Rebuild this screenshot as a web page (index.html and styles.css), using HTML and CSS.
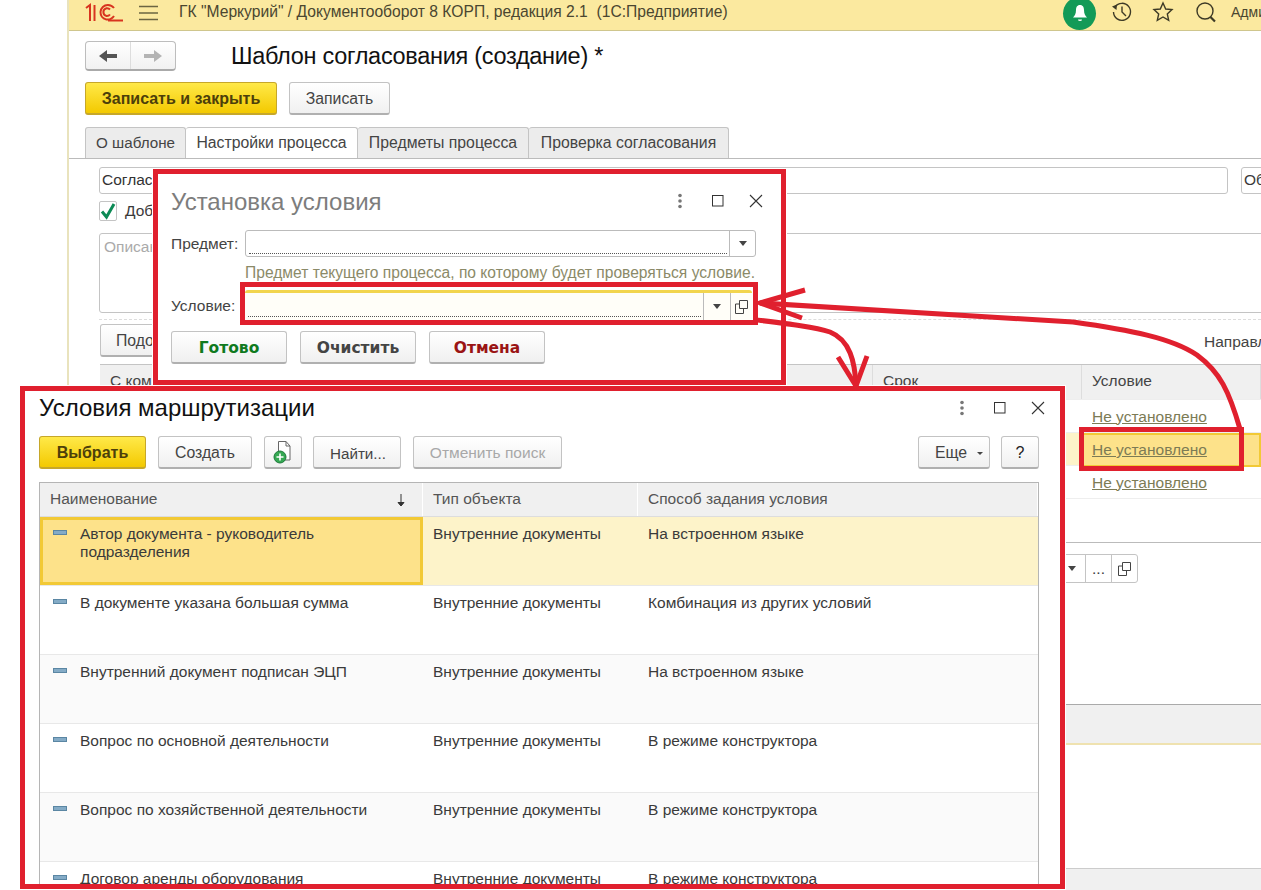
FILE: index.html
```html
<!DOCTYPE html>
<html lang="ru">
<head>
<meta charset="utf-8">
<title>Шаблон согласования</title>
<link rel="stylesheet" href="styles.css">
</head>
<body>
<div class="desktop">

  <main class="app">
    <header class="topbar">
      <svg class="logo" viewBox="0 0 38 20" width="38" height="20"><g fill="none" stroke="#d8341f" stroke-width="2"><path d="M1 5 5 2V18"/><path d="M9.500 2V18"/><path d="M29 13a8 8 0 0 1-8 3.400 7.400 7.400 0 0 1-5.500-7.400A7.300 7.300 0 0 1 23 2a8 8 0 0 1 6 3"/><path d="M25 11.500a4 4 0 0 1-3.500 1.500 4 4 0 0 1 0-7.800 4 4 0 0 1 3.500 1.300"/><path d="M23 17.500H38"/></g></svg>
      <svg class="burger" viewBox="0 0 19 16" width="19" height="16"><path d="M0 1.500H19M0 8H19M0 14.500H19" stroke="#6b6542" stroke-width="1.300"/></svg>
      <span class="apptitle">ГК "Меркурий" / Документооборот 8 КОРП, редакция 2.1&nbsp; (1С:Предприятие)</span>
      <span class="spacer"></span>
      <span class="bell"><svg viewBox="0 0 20 20" width="20" height="20"><path d="M10 2c3 0 4 2.500 4 5 0 4 1.500 6 3 7.500H3C4.500 13 6 11 6 7c0-2.500 1-5 4-5Z" fill="#fff"/><path d="M8 16.500h4a2 1.500 0 0 1-4 0Z" fill="#fff"/></svg></span>
      <svg class="tico clock" viewBox="0 0 22 22" width="22" height="22"><path d="M4 6a8.500 8.500 0 1 1-1.500 5M11 5.500V11l4 4" fill="none" stroke="#3d3a26" stroke-width="1.400"/><path d="M1 5.500 6 3.500 5.500 9Z" fill="#3d3a26"/></svg>
      <svg class="tico star" viewBox="0 0 22 22" width="22" height="22"><path d="M11 2l2.700 6 6.300.6-4.700 4.300 1.400 6.500L11 16l-5.700 3.400 1.400-6.500L2 8.600 8.300 8Z" fill="none" stroke="#3d3a26" stroke-width="1.400"/></svg>
      <svg class="tico find-ico" viewBox="0 0 22 22" width="22" height="22"><circle cx="10" cy="10" r="8" fill="none" stroke="#3d3a26" stroke-width="1.400"/><path d="M15.500 16 20 20.500" stroke="#3d3a26" stroke-width="2.200"/></svg>
      <span class="user">Администратор</span>
    </header>

    <div class="navrow">
      <div class="navbtns">
        <span class="navbtn"><svg viewBox="0 0 18 14" width="18" height="14"><path d="M0 7 8 1V5H18V9H8V13Z" fill="#555"/></svg></span>
        <span class="navbtn"><svg viewBox="0 0 18 14" width="18" height="14"><path d="M18 7 10 1V5H0V9H10V13Z" fill="#b4b4b4"/></svg></span>
      </div>
      <h1 class="doctitle">Шаблон согласования (создание) *</h1>
    </div>

    <div class="cmdrow">
      <button class="btn primary wide">Записать и закрыть</button>
      <button class="btn save">Записать</button>
    </div>

    <div class="tabs">
      <span class="tab t1">О шаблоне</span>
      <span class="tab t2 active">Настройки процесса</span>
      <span class="tab t3">Предметы процесса</span>
      <span class="tab t4">Проверка согласования</span>
    </div>

    <section class="pane">
      <div class="namerow">
        <div class="field namefield">Согласование</div>
        <div class="field objfield">Об</div>
      </div>
      <label class="checkrow">
        <span class="check"><svg viewBox="0 0 18 20" width="18" height="20"><path d="M3 10.500 7.500 16 15 3" fill="none" stroke="#0c8a55" stroke-width="3"/></svg></span>
        <span>Добавить</span>
      </label>
      <div class="field descfield">Описание</div>
      <div class="dashline"></div>
      <div class="subrow">
        <button class="btn sub">Подобрать</button>
        <span class="spacer"></span>
        <span class="direction">Направление</span>
      </div>
      <div class="grid">
        <div class="grow head"><span>С комментарием</span><span>Срок</span><span>Условие</span></div>
        <div class="grow"><span></span><span></span><a class="lnk">Не установлено</a></div>
        <div class="grow sel"><span></span><span></span><a class="lnk cur">Не установлено</a></div>
        <div class="grow"><span></span><span></span><a class="lnk">Не установлено</a></div>
      </div>
      <div class="lower">
        <div class="field combo"><i class="caret"></i><b class="cell">...</b><b class="cell last"><svg class="open" viewBox="0 0 13 14" width="13" height="14"><path d="M4.500 .5h8v8h-8ZM4.500 4H.5v9.500h8V9" fill="none" stroke="#444"/></svg></b></div>
      </div>
      <div class="panel"></div>
      <div class="panel2"></div>
    </section>
  </main>

  <section class="dlg dlg1">
    <div class="dlghead">
      <h2 class="dlgtitle muted">Установка условия</h2>
      <span class="spacer"></span>
      <span class="winctl">
        <svg viewBox="0 0 8 16" width="8" height="16"><g fill="#777"><circle cx="4" cy="2.500" r="1.800"/><circle cx="4" cy="8" r="1.800"/><circle cx="4" cy="13.500" r="1.800"/></g></svg>
        <svg viewBox="0 0 12 12" width="12" height="12"><rect x=".5" y=".5" width="10.500" height="10.500" fill="none" stroke="#333"/></svg>
        <svg viewBox="0 0 14 14" width="14" height="14"><path d="M1 1 13 13M13 1 1 13" stroke="#333" stroke-width="1.100"/></svg>
      </span>
    </div>
    <div class="frow subject">
      <span class="flabel">Предмет:</span>
      <div class="finput f1"><span class="fval"></span><b class="fbtn"><i class="caret"></i></b></div>
    </div>
    <p class="hint">Предмет текущего процесса, по которому будет проверяться условие.</p>
    <div class="frow condition">
      <span class="flabel">Условие:</span>
      <div class="finput f2"><span class="fval"></span><b class="fbtn"><i class="caret"></i></b><b class="fbtn narrow"><svg class="open" viewBox="0 0 13 14" width="13" height="14"><path d="M4.500 .5h8v8h-8ZM4.500 4H.5v9.500h8V9" fill="none" stroke="#444"/></svg></b></div>
    </div>
    <div class="dlgbtns">
      <button class="btn act ok">Готово</button>
      <button class="btn act clr">Очистить</button>
      <button class="btn act cancel">Отмена</button>
    </div>
    <div class="redbox condbox"></div>
  </section>

  <section class="dlg dlg2">
    <div class="dlghead">
      <h2 class="dlgtitle">Условия маршрутизации</h2>
      <span class="spacer"></span>
      <span class="winctl">
        <svg viewBox="0 0 8 16" width="8" height="16"><g fill="#777"><circle cx="4" cy="2.500" r="1.800"/><circle cx="4" cy="8" r="1.800"/><circle cx="4" cy="13.500" r="1.800"/></g></svg>
        <svg viewBox="0 0 12 12" width="12" height="12"><rect x=".5" y=".5" width="10.500" height="10.500" fill="none" stroke="#333"/></svg>
        <svg viewBox="0 0 14 14" width="14" height="14"><path d="M1 1 13 13M13 1 1 13" stroke="#333" stroke-width="1.100"/></svg>
      </span>
    </div>
    <div class="tools">
      <button class="btn primary pick">Выбрать</button>
      <button class="btn create">Создать</button>
      <button class="btn iconbtn"><svg viewBox="0 0 20 24" width="20" height="24"><path d="M5.500 1.500H13l4 4.500V20H5.500Z" fill="#fff" stroke="#666"/><path d="M13 1.500V6h4" fill="none" stroke="#666"/><circle cx="7" cy="17" r="6" fill="#35a853" stroke="#1d7a3a"/><path d="M7 13.500v7M3.500 17h7" stroke="#fff" stroke-width="1.600"/></svg></button>
      <button class="btn find">Найти...</button>
      <button class="btn off">Отменить поиск</button>
      <span class="spacer"></span>
      <button class="btn more">Еще<i class="caret small"></i></button>
      <button class="btn help">?</button>
    </div>
    <div class="list">
      <div class="lrow lhead">
        <span class="lcell">Наименование<svg class="sort" viewBox="0 0 10 14" width="10" height="14"><path d="M5 1V12M2 9.500 5 13 8 9.500Z" stroke="#333" fill="#333"/></svg></span>
        <span class="lcell">Тип объекта</span>
        <span class="lcell">Способ задания условия</span>
      </div>
      <div class="lrow current">
        <span class="lcell focus"><i class="mark"></i><span>Автор документа - руководитель подразделения</span></span>
        <span class="lcell">Внутренние документы</span>
        <span class="lcell">На встроенном языке</span>
      </div>
      <div class="lrow">
        <span class="lcell"><i class="mark"></i><span>В документе указана большая сумма</span></span>
        <span class="lcell">Внутренние документы</span>
        <span class="lcell">Комбинация из других условий</span>
      </div>
      <div class="lrow alt">
        <span class="lcell"><i class="mark"></i><span>Внутренний документ подписан ЭЦП</span></span>
        <span class="lcell">Внутренние документы</span>
        <span class="lcell">На встроенном языке</span>
      </div>
      <div class="lrow">
        <span class="lcell"><i class="mark"></i><span>Вопрос по основной деятельности</span></span>
        <span class="lcell">Внутренние документы</span>
        <span class="lcell">В режиме конструктора</span>
      </div>
      <div class="lrow alt">
        <span class="lcell"><i class="mark"></i><span>Вопрос по хозяйственной деятельности</span></span>
        <span class="lcell">Внутренние документы</span>
        <span class="lcell">В режиме конструктора</span>
      </div>
      <div class="lrow">
        <span class="lcell"><i class="mark"></i><span>Договор аренды оборудования</span></span>
        <span class="lcell">Внутренние документы</span>
        <span class="lcell">В режиме конструктора</span>
      </div>
    </div>
  </section>

  <div class="redbox linkbox"></div>

  <svg class="arrows" viewBox="0 0 1261 890" width="1261" height="890">
    <g fill="none" stroke="#e0202e" stroke-width="5" stroke-linejoin="round">
      <path d="M1240 429C1229 391 1220 372 1197 355 1172 338 1130 330 1073 322L760 303"/>
      <path d="M805 290 760 303 802 318"/>
      <path d="M757 320C790 324 815 327 830 332 850 340 855 362 856 386"/>
      <path d="M838 357 856 386 867 356"/>
    </g>
  </svg>
</div>
</body>
</html>
```
FILE: styles.css
```css
* { box-sizing: border-box; }
html, body { margin: 0; height: 100%; background: #fff; overflow: hidden; }
body { font-family: "Liberation Sans", Arial, sans-serif; font-size: 15.500px; color: #3a3a3a; }
h1, h2, p { margin: 0; font-weight: normal; }
button { font-family: inherit; cursor: default; }

.desktop { position: relative; width: 1261px; height: 890px; overflow: hidden; }
.spacer { flex: 1; }

/* main window */
.app { position: absolute; left: 67px; top: 0; width: 1194px; height: 890px; border-left: 2px solid #e9e3bd; overflow: hidden; }
.topbar { display: flex; align-items: center; height: 31px; padding-left: 16px; background: #fbe99f; border-bottom: 1px solid #cfc68d; }
.logo { flex: none; margin-top: -4px; }
.burger { flex: none; margin: -5px 0 0 16px; }
.apptitle { margin: -6px 0 0 21px; color: #4a4630; font-size: 15.650px; white-space: nowrap; }
.bell { flex: none; display: flex; align-items: center; justify-content: center; width: 33px; height: 33px; margin: -4px 15px 0 0; border-radius: 50%; background: #139a57; }
.tico { flex: none; margin-top: -6px; }
.clock { margin-right: 19px; }
.star { margin-right: 21px; }
.find-ico { margin-right: 14px; }
.user { flex: none; margin-top: -6px; margin-right: -90px; width: 120px; color: #4a4630; font-size: 14px; white-space: nowrap; }

.navrow { display: flex; align-items: center; height: 30px; margin: 10px 0 0 16px; }
.navbtns { display: flex; width: 91px; height: 30px; border: 1px solid #bdbdbd; border-bottom: 2px solid #aaa; border-radius: 4px; background: linear-gradient(#fff, #f1f1f1); }
.navbtn { flex: 1; display: flex; align-items: center; justify-content: center; }
.navbtn + .navbtn { border-left: 1px solid #ddd; }
.doctitle { margin-left: 55px; font-size: 23.500px; letter-spacing: -.3px; color: #111; white-space: nowrap; }

.cmdrow { display: flex; gap: 12px; margin: 11px 0 0 16px; }
.btn { display: inline-flex; align-items: center; justify-content: center; height: 33px; padding: 2px 0 0; border: 1px solid #c3c3c3; border-bottom: 2px solid #b0b0b0; border-radius: 3px; background: linear-gradient(#fff, #f0f0f0); color: #444; font-size: 15.800px; white-space: nowrap; }
.btn.primary { background: linear-gradient(#ffe949, #f3c900); border-color: #c6a72a; color: #4c3f0a; font-weight: bold; font-size: 16px; }
.wide { width: 192px; }
.save { width: 101px; }

.tabs { display: flex; margin: 12px 0 0 16px; height: 32px; }
.tab { display: flex; align-items: center; justify-content: center; height: 32px; border: 1px solid #c4c4c4; border-bottom: 1px solid #bbb; border-left: 0; background: #ececec; color: #444; border-radius: 3px 3px 0 0; white-space: nowrap; font-size: 15.800px; }
.tab.t1 { width: 101px; padding-bottom: 2px; border-left: 1px solid #c4c4c4; font-size: 15.200px; }
.tab.t2 { width: 172px; background: #fff; border-bottom-color: #fff; }
.tab.t3 { width: 171px; }
.tab.t4 { width: 200px; }

.pane { position: relative; height: 732px; border-top: 1px solid #bbb; margin-top: -1px; padding: 8px 0 0 30px; }
.namerow { display: flex; gap: 13px; }
.field { border: 1px solid #c4c4c4; border-radius: 3px; background: #fff; }
.namefield { width: 1129px; height: 27px; padding: 3px 2px; color: #333; }
.objfield { flex: 1; padding: 3px 2px; margin-right: -10px; }
.checkrow { display: flex; align-items: center; gap: 8px; margin-top: 7px; height: 19px; }
.check { display: block; width: 18px; height: 20px; border: 1px solid #c4c4c4; border-radius: 2px; background: #fff; }
.check svg { display: block; margin: -1px; }
.descfield { height: 80px; margin: 13px -10px 0 0; padding: 4px; color: #aaa; }
.dashline { margin: 6px -10px 0 0; border-top: 1px dashed #ddd; }
.subrow { display: flex; align-items: center; margin-top: 4px; height: 33px; padding-left: 1px; }
.btn.sub { width: 130px; justify-content: flex-start; padding-left: 15px; }
.direction { width: 57px; padding-top: 2px; overflow: hidden; white-space: nowrap; color: #444; }
.grid { margin: 7px 0 0 1px; border-top: 1px solid #c4c4c4; }
.grow { display: grid; grid-template-columns: 773px 209px 1fr; height: 33px; align-items: center; border-bottom: 1px solid #eee; }
.grow > * { padding-left: 10px; }
.grow.head { height: 35px; background: #f0f0f0; color: #444; }
.grow.head > * { display: flex; align-items: center; height: 100%; padding-bottom: 3px; border-right: 1px solid #ddd; }
.grow.sel { background: #fdf3c9; }
.lnk { color: #7c7b55; text-decoration: underline; line-height: 31px; }
.lnk.cur { align-self: stretch; background: #fde28a; border: 2px solid #f2c935; padding-left: 8px; line-height: 30px; }
.lower { margin-top: 43px; border-top: 1px solid #bbb; padding-top: 11px; }
.combo { display: flex; align-items: center; justify-content: flex-end; width: 1039px; height: 29px; }
.combo .caret { margin-right: 9px; }
.cell { display: flex; align-items: center; justify-content: center; width: 26px; height: 100%; border-left: 1px solid #c4c4c4; font-weight: normal; }
.panel { margin-top: 121px; height: 41px; background: #f0f0f0; border-top: 1px solid #aaa; border-bottom: 2px solid #efe2b0; }
.panel2 { margin-top: 123px; height: 23px; background: #f0f0f0; border-top: 1px solid #ccc; }

.caret { display: inline-block; width: 0; height: 0; border: 4px solid transparent; border-top: 5px solid #444; border-bottom: 0; }
.caret.small { border-width: 3px; border-top-width: 3px; border-bottom: 0; margin-left: 10px; }

/* dialogs */
.dlg { position: absolute; background: #fff; border: 5px solid #e0202e; box-shadow: 0 0 0 1px #fff; }
.dlg1 { left: 153px; top: 169px; width: 633px; height: 216px; padding: 0 13px; }
.dlg2 { left: 20px; top: 386px; width: 1045px; height: 503px; padding: 0 21px 0 14px; overflow: hidden; }
.dlghead { display: flex; align-items: center; }
.dlg1 .dlghead { height: 52px; }
.dlg2 .dlghead { height: 34px; }
.dlgtitle { font-size: 24px; color: #111; white-space: nowrap; }
.dlg1 .dlgtitle { padding-top: 3px; }
.dlgtitle.muted { color: #7d7d7d; }
.winctl { display: flex; align-items: center; gap: 25px; }
.winctl svg:first-child { margin-right: 3px; }
.dlg1 .winctl { margin-right: 5px; padding-top: 2px; }
.dlg2 .winctl { margin: 0 -6px 0 0; }

.frow { display: flex; align-items: center; }
.flabel { flex: none; color: #444; font-size: 15.500px; }
.subject { margin-top: 4px; gap: 6px; }
.subject .flabel { width: 68px; }
.condition { margin-top: 8px; gap: 6px; height: 30px; }
.condition .flabel { width: 68px; padding-top: 2px; }
.finput { display: flex; height: 27px; border: 1px solid #bbb; border-radius: 3px; }
.f1 { width: 511px; }
.f2 { width: 507px; height: 30px; border: 0; border-top: 3px solid #f2d54e; background: #fffef8; }
.fval { flex: 1; margin: 0 2px 2px 3px; border-bottom: 1px dotted #555; }
.f2 .fval { margin-bottom: 3px; }
.fbtn { display: flex; align-items: center; justify-content: center; width: 26px; border-left: 1px solid #bbb; }
.f2 .fbtn { width: 27px; }
.f2 .fbtn.narrow { width: 22px; }
.hint { margin: 7px 0 0 74px; color: #8b8a68; font-size: 15.600px; white-space: nowrap; line-height: 18px; }
.dlgbtns { display: flex; gap: 13px; margin-top: 11px; }
.btn.act { width: 116px; font-size: 15.500px; font-weight: bold; font-family: "DejaVu Sans", sans-serif; }
.ok { color: #0f7a1e; }
.btn.clr { color: #444; }
.btn.cancel { color: #9a1414; }

.redbox { position: absolute; border: 5px solid #e0202e; background: transparent; }
.condbox { left: 82px; top: 108px; width: 518px; height: 43px; }
.linkbox { left: 1079px; top: 427px; width: 165px; height: 44px; }

.tools { display: flex; gap: 12px; margin-top: 11px; height: 33px; }
.pick { width: 107px; }
.create { width: 94px; }
.iconbtn { width: 38px; padding-top: 0; }
.btn.find { width: 88px; margin-left: -1px; padding-left: 2px; font-size: 15.200px; }
.btn.off { width: 149px; color: #a8a8a8; font-size: 15.500px; }
.btn.more { width: 72px; padding-left: 10px; }
.help { width: 38px; color: #222; font-size: 16px; }
.tools .more + .help { margin-left: -1px; }

.list { margin-top: 13px; border: 1px solid #b5b5b5; border-bottom: 0; width: 1000px; }
.lrow { display: grid; grid-template-columns: 383px 215px 1fr; height: 69px; border-bottom: 1px solid #e8e8e8; line-height: 18px; }
.lrow.alt { background: #fafafa; }
.lcell { display: flex; padding: 8px 0 0 10px; color: #3a3a3a; }
.lrow.lhead { height: 34px; background: #f0f0f0; border-bottom: 1px solid #ddd; }
.lhead .lcell { position: relative; padding-top: 7px; border-right: 1px solid #fff; color: #555; }
.sort { position: absolute; right: 16px; top: 10px; }
.current { background: #fdf3c9; }
.lcell.focus { background: #fde28a; border: 3px solid #f2c935; padding: 5px 0 0 9px; }
.mark { flex: none; width: 14px; height: 5px; margin: 5px 13px 0 3px; background: #84abc6; border: 1px solid #5a86a3; }
.focus .mark { margin-left: 1px; }
.lcell > span { max-width: 300px; }

.arrows { position: absolute; left: 0; top: 0; pointer-events: none; }
```
